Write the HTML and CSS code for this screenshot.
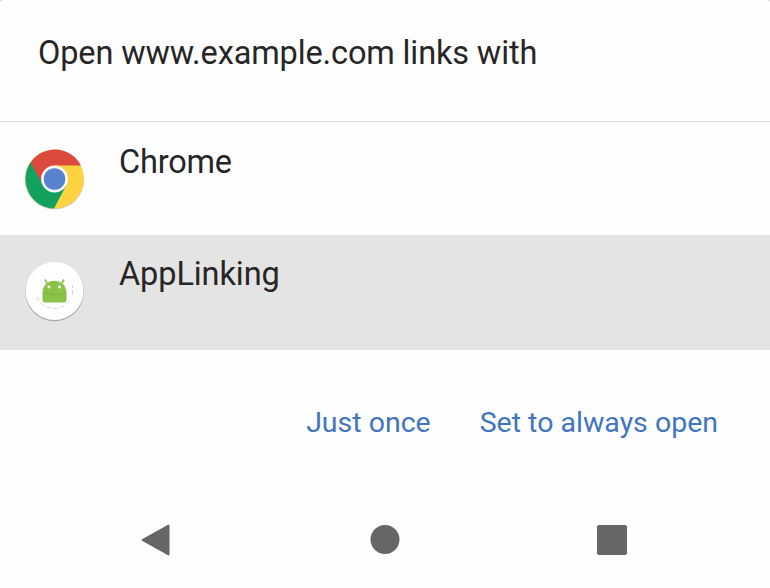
FILE: index.html
```html
<!DOCTYPE html>
<html>
<head>
  <meta charset="utf-8">
  <title>Open with</title>
  <link rel="stylesheet" href="styles.css">
</head>
<body>
  <div class="sheet">
    <h1 class="title">Open www.example.com links with</h1>
    <div class="app">
      <svg class="icon" viewBox="0 0 64 64">
        <circle cx="32.5" cy="33" r="29.6" fill="#000" opacity="0.18"/>
        <circle cx="32.5" cy="32" r="29.4" fill="#ffd23f"/>
        <path d="M32 32 L8.5 15.5 A29.4 29.4 0 0 0 32 61.4 L44.5 38 Z" fill="#12a15e"/>
        <path d="M8.5 15.5 A29.4 29.4 0 0 1 59 18.5 L32 18.5 L20.5 37 Z" fill="#dc4a3e"/>
        <circle cx="32.5" cy="32" r="13.4" fill="#fff"/>
        <circle cx="32.5" cy="32" r="10.8" fill="#5683cc"/>
      </svg>
      <span class="name">Chrome</span>
    </div>
    <div class="app selected">
      <svg class="icon" viewBox="0 0 64 64">
        <circle cx="32.5" cy="33" r="29.3" fill="#000" opacity="0.25"/>
        <circle cx="32.5" cy="32" r="29" fill="#fff"/>
        <path d="M15 38 A19 19 0 0 0 49 40 M50.5 36 V26" fill="none" stroke="#d8d8d8" stroke-width="1" stroke-dasharray="5 2"/>
        <path d="M25 24 L23 20.5 M40 24 L42 20.5" stroke="#8bc34a" stroke-width="1.8"/>
        <path d="M20.5 34 C20.5 17.5 44.5 17.5 44.5 34 V41 Q44.5 43.5 42 43.5 H23 Q20.5 43.5 20.5 41 Z" fill="#8bc34a"/>
        <path d="M21.5 35 H43.5" stroke="#79aa46" stroke-width="1" stroke-dasharray="2 1"/>
        <circle cx="27" cy="28" r="1.4" fill="#fff"/>
        <circle cx="37.5" cy="28" r="1.4" fill="#fff"/>
      </svg>
      <span class="name">AppLinking</span>
    </div>
    <div class="actions">
      <button class="action">Just once</button>
      <button class="action">Set to always open</button>
    </div>
    <div class="navbar">
      <svg class="nav-icon" viewBox="0 0 34 34"><path d="M3.5 17 L29.5 2.5 V31.5 Z" fill="#666" stroke="#666" stroke-width="2" stroke-linejoin="round"/></svg>
      <svg class="nav-icon" viewBox="0 0 34 34"><circle cx="17" cy="16.5" r="14.5" fill="#666"/></svg>
      <svg class="nav-icon" viewBox="0 0 34 34"><rect x="2" y="2" width="30" height="30" rx="2" fill="#666"/></svg>
    </div>
  </div>
</body>
</html>
```

FILE: styles.css
```css
body{
  margin: 0;
  background-color: #ccc;
  font-family: Roboto, sans-serif;
  color: #262626;
}

.sheet{
  height: 588px;
  background-color: #fefefe;
  border-radius: 3px 3px 0 0;
  overflow: hidden;
}

.title{
  box-sizing: border-box;
  height: 122px;
  margin: 0 0 1px;
  padding: 33px 38px 0;
  border-bottom: 1px solid #d8d8d8;
  font-size: 32.5px;
  font-weight: 400;
  line-height: 40px;
  letter-spacing: -0.13px;
}

.app{
  display: flex;
  box-sizing: border-box;
  height: 112px;
  padding: 18px 22px 0;
}

.selected{
  height: 115px;
  background-color: #e4e4e4;
}

.icon{
  width: 64px;
  height: 64px;
  margin-top: 6px;
}

.name{
  margin-top: 1px;
  margin-left: 33px;
  font-size: 32.5px;
  line-height: 40px;
  letter-spacing: -0.2px;
}

.selected .name{
  letter-spacing: -0.1px;
}

.actions{
  display: flex;
  justify-content: flex-end;
  gap: 49px;
  padding: 53px 52px 0 0;
}

.action{
  padding: 0;
  border: 0;
  background: none;
  color: #4274bf;
  font-family: Roboto, sans-serif;
  font-size: 28.5px;
  line-height: 40px;
  cursor: pointer;
}

.navbar{
  display: flex;
  justify-content: space-between;
  padding: 80px 141px 0 139px;
}

.nav-icon{
  width: 34px;
  height: 34px;
}

.nav-icon:nth-child(2){
  margin-left: 2px;
}
```
